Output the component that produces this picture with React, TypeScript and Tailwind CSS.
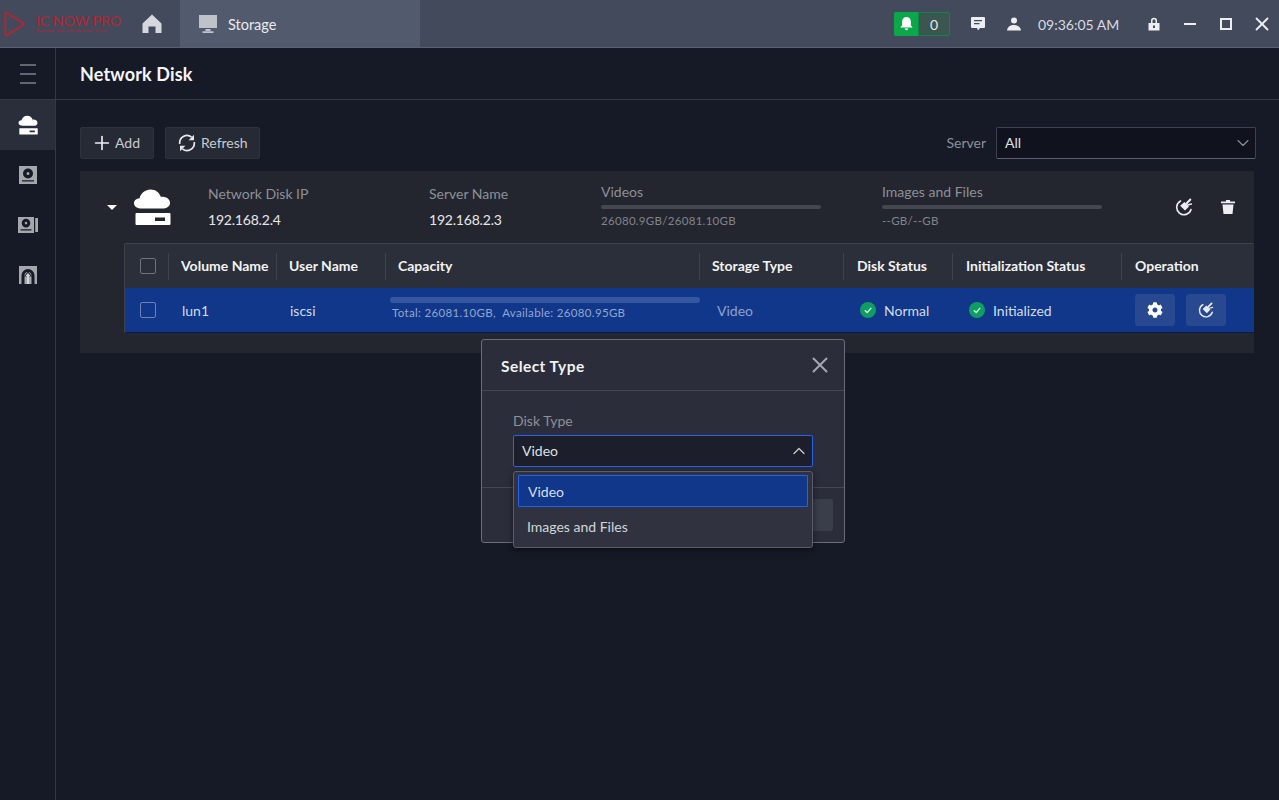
import { ChevronDown, ChevronUp, Plus, X } from 'lucide-react';
import { FaCog } from 'react-icons/fa';

function CloudDisk({ className }: { className?: string }) {
  return (
    <svg viewBox="0 0 38 38" className={className} fill="currentColor">
      <path d="M9 20.500C4.500 20.500 1 18.600 1 15.200 1 12.400 3.400 10.400 6.600 10.200 7.800 5.200 12.200 1.600 17.600 1.600c4.700 0 8.700 2.800 10.200 7.200 4.600-.4 9.200 1.600 9.200 6.200 0 3.600-3.400 5.500-7.800 5.500z" />
      <path fillRule="evenodd" d="M3.500 25H36.500a1 1 0 0 1 1 1v10a1 1 0 0 1-1 1H3.500a1 1 0 0 1-1-1V26a1 1 0 0 1 1-1zM22 29.500v3.500h10v-3.500z" />
    </svg>
  );
}

function DiskIcon() {
  return (
    <svg viewBox="0 0 18 18" className="h-[18px] w-[18px] text-[#a4a7ae]" fill="currentColor">
      <path fillRule="evenodd" d="M0 0h18v18H0zM9 2.500a5 5 0 1 0 0 10 5 5 0 0 0 0-10zM9 6a1.500 1.500 0 1 1 0 3 1.500 1.500 0 0 1 0-3zM3 14.300v1.200h12v-1.200z" />
    </svg>
  );
}

function UploadIcon() {
  return (
    <svg viewBox="0 0 18 18" className="h-[18px] w-[18px]">
      <rect width="18" height="18" fill="#a4a7ae" />
      <path d="M2.500 18V9.500a6.500 6.500 0 0 1 13 0V18H12.500V9.500a3.500 3.500 0 0 0-7 0V18z" fill="#161a26" />
      <path d="M9 5.500 13.500 10.500H5z" fill="#161a26" />
      <path d="M9 7 11.800 10.200H10V18H8V10.200H6.200z" fill="#d4d6da" />
    </svg>
  );
}

function RecordIcon() {
  return (
    <svg viewBox="0 0 20 16" className="h-4 w-5 text-[#a4a7ae]" fill="currentColor">
      <path fillRule="evenodd" d="M0 0h16v16H0zM8 1.800a4.300 4.300 0 1 0 0 8.600 4.300 4.300 0 0 0 0-8.600zM8 4.800a1.300 1.300 0 1 1 0 2.600 1.300 1.300 0 0 1 0-2.600zM2.500 12.200v1.200h11v-1.200z" />
      <path d="M17.200 1H20v14h-2.800z" />
    </svg>
  );
}

function CleanIcon({ className }: { className?: string }) {
  return (
    <svg viewBox="0 0 18 18" className={className} fill="none" stroke="currentColor">
      <path d="M5.500 3A7.300 7.300 0 1 0 16 11.500" strokeWidth="1.600" strokeLinecap="round" />
      <path d="M5.200 7.800 9.400 3.900 14 8.400 10 12.600z" fill="currentColor" stroke="none" />
      <path d="M11.500 5.500 15.300 1.500" strokeWidth="2" strokeLinecap="round" />
      <path d="M12.500 7 16.500 6" strokeWidth="1.300" strokeLinecap="round" />
    </svg>
  );
}

function RefreshIcon() {
  return (
    <svg viewBox="0 0 18 18" className="h-[18px] w-[18px] text-[#e6e7ea]" fill="none" stroke="currentColor" strokeWidth="1.700">
      <path d="M1.800 10A7.300 7.300 0 0 1 13.600 3.200" />
      <path d="M16.200 8A7.300 7.300 0 0 1 4.400 14.800" />
      <path d="M16 .8v5.400h-5.400z M2 17.200v-5.400h5.400z" fill="currentColor" stroke="none" />
    </svg>
  );
}

function CheckCircle() {
  return (
    <svg viewBox="0 0 16 16" className="h-4 w-4 shrink-0">
      <circle cx="8" cy="8" r="8" fill="#0f9d63" />
      <path d="M4.800 8.200 7.200 10.500 11.300 5.900" fill="none" stroke="#cfeee0" strokeWidth="1.300" />
    </svg>
  );
}

function UsageBlock({ title, value }: { title: string; value: string }) {
  return (
    <div className="w-[220px] -translate-y-[1px]">
      <div className="text-[14px] leading-[18px] text-[#8d9097]">{title}</div>
      <div className="mt-[4px] h-[4px] rounded-full bg-[#444752]" />
      <div className="mt-[4px] text-[11.500px] leading-[16px] tracking-[0.3px] text-[#81848b]">{value}</div>
    </div>
  );
}

const columns = [
  { label: 'Volume Name', width: 'w-[108px]', pad: 'pl-[12px]' },
  { label: 'User Name', width: 'w-[109px]', pad: 'pl-[12px]' },
  { label: 'Capacity', width: 'w-[314px]', pad: 'pl-[12px]' },
  { label: 'Storage Type', width: 'w-[144px]', pad: 'pl-[12px]' },
  { label: 'Disk Status', width: 'w-[109px]', pad: 'pl-[13px]' },
  { label: 'Initialization Status', width: 'w-[169px]', pad: 'pl-[13px]' },
  { label: 'Operation', width: 'flex-1', pad: 'pl-[13px]' },
];

export default function App() {
  return (
    <div className="relative flex h-[800px] w-[1279px] flex-col overflow-hidden bg-[#161a26] font-['Lato',sans-serif] text-[14px] text-white">
      {/* Title bar */}
      <div className="flex h-[48px] shrink-0 items-stretch border-b border-[#5d6273] bg-[#434a5c]">
        <div className="flex w-[124px] items-center pl-[3px]">
          <svg viewBox="0 0 22 26" className="h-[26px] w-[22px] shrink-0" fill="none" stroke="#b8242e" strokeWidth="1.800" strokeLinejoin="round">
            <path d="M2.200 2.500Q2.200 1.200 3.500 1.800L20.400 12.200Q21.200 13 20.400 13.800L4 24.300Q2.800 24.800 2.400 23.500z" />
          </svg>
          <div className="ml-[11px] flex flex-col whitespace-nowrap">
            <span className="text-[14.200px] leading-[14px] tracking-[-0.1px] text-[#b8242e]">IC NOW PRO</span>
            <span className="mt-[1px] text-[3.400px] leading-[5px] text-[#b8242e]">Professional, Stable, &amp; Reliable Remote Viewing</span>
          </div>
        </div>
        <div className="flex w-[56px] items-center justify-center">
          <svg viewBox="0 0 20 20" className="h-[20px] w-[20px]">
            <path d="M10 .5 19.500 9.500V19H13V13H7V19H.5V9.500z" fill="#d6d8dd" />
            <path d="M6.500 12.500h7V19h-7z" fill="#434a5c" />
          </svg>
        </div>
        <div className="flex w-[240px] items-center bg-[#525a6e] pl-[19px]">
          <svg viewBox="0 0 18 18" className="h-[18px] w-[18px] text-[#bfc2c9]" fill="currentColor">
            <path fillRule="evenodd" d="M0 0h18v13H0z" />
            <path d="M6.500 14h5v2h-5zM3.500 16.200h11V18h-11z" />
          </svg>
          <span className="ml-[11px] pt-[2px] text-[14.500px] text-[#e9eaed]">Storage</span>
        </div>
        <div className="flex-1" />
        <div className="flex items-center pr-[9px]">
          <div className="flex h-[24px] w-[24px] items-center justify-center rounded-l-[2px] bg-[#0aa84a]">
            <svg viewBox="0 0 14 16" className="h-[14px] w-[13px]" fill="white">
              <path d="M7 0a5 5 0 0 1 5 5v4.500l2 2.500H0l2-2.500V5a5 5 0 0 1 5-5zM5 13h4a2 2 0 0 1-4 0z" />
            </svg>
          </div>
          <div className="flex h-[24px] w-[32px] items-center justify-center rounded-r-[2px] border border-[#0d8a42] bg-[#3b5650] pt-[2px] text-[14px] text-[#e6e7ea]">0</div>
          <svg viewBox="0 0 14 14" className="ml-[21px] h-[14px] w-[14px]" fill="#eceef1">
            <path fillRule="evenodd" d="M1 0h12a1 1 0 0 1 1 1v9a1 1 0 0 1-1 1H9l-2 2.500L6 11H1a1 1 0 0 1-1-1V1a1 1 0 0 1 1-1zM3 3v1.300h8V3zM3 6v1.300h5.500V6z" />
          </svg>
          <svg viewBox="0 0 14 14" className="ml-[22px] h-[14px] w-[14px]" fill="#eceef1">
            <circle cx="7" cy="3.500" r="3" />
            <path d="M0 13.500C.4 9.800 3.300 8 7 8s6.600 1.800 7 5.500z" />
          </svg>
          <span className="ml-[17px] w-[90px] whitespace-nowrap pt-[2px] text-[14px] text-[#d9dbe0]">09:36:05 AM</span>
          <svg viewBox="0 0 12 14" className="ml-[20px] h-[14px] w-[12px]" fill="#eceef1">
            <path fillRule="evenodd" d="M3 6V3.800a3 3 0 0 1 6 0V6h2.500v7.500H.5V6zM4.500 6h3V3.800a1.500 1.500 0 0 0-3 0zM5 8.500v2.500h2V8.500z" />
          </svg>
          <div className="ml-[24px] h-[2px] w-[12px] bg-[#eceef1]" />
          <div className="ml-[24px] h-[12px] w-[12px] border-2 border-[#eceef1]" />
          <X className="-mr-[3px] ml-[19px] h-[22px] w-[22px] text-[#eceef1]" strokeWidth={2} absoluteStrokeWidth />
        </div>
      </div>

      <div className="flex min-h-0 flex-1">
        {/* Sidebar */}
        <aside className="flex w-[56px] shrink-0 flex-col border-r border-[#343845]">
          <div className="flex h-[52px] shrink-0 flex-col items-center justify-center gap-[7px] border-b border-[#343845]">
            <div className="h-[2px] w-[16px] bg-[#63666f]" />
            <div className="h-[2px] w-[16px] bg-[#63666f]" />
            <div className="h-[2px] w-[16px] bg-[#63666f]" />
          </div>
          <div className="flex h-[50px] items-center justify-center bg-[#2a2e3a]">
            <CloudDisk className="h-[20px] w-[20px] text-white" />
          </div>
          <div className="flex h-[50px] items-center justify-center">
            <DiskIcon />
          </div>
          <div className="flex h-[50px] items-center justify-center">
            <RecordIcon />
          </div>
          <div className="flex h-[50px] items-center justify-center">
            <UploadIcon />
          </div>
        </aside>

        <main className="min-w-0 flex-1">
          <div className="flex h-[52px] items-center border-b border-[#343845] pl-[24px] pt-[2px] text-[18px] font-bold tracking-[0.15px] text-[#f4f5f6]">Network Disk</div>

          <div className="pl-[24px] pr-[25px]">
            {/* Toolbar */}
            <div className="mt-[26px] flex h-[33px] items-center">
              <button className="flex h-[32px] w-[74px] items-center rounded-[2px] border border-[#2f323d] bg-[#262a35] pl-[10px] text-[14px] text-[#c9cbd0]">
                <Plus className="h-[22px] w-[22px] text-[#eceef1]" strokeWidth={1.800} absoluteStrokeWidth />
                <span className="ml-[2px]">Add</span>
              </button>
              <button className="ml-[11px] flex h-[32px] w-[95px] items-center rounded-[2px] border border-[#2f323d] bg-[#262a35] pl-[12px] text-[14px] text-[#c9cbd0]">
                <RefreshIcon />
                <span className="ml-[5px]">Refresh</span>
              </button>
              <div className="flex-1" />
              <span className="mr-[10px] text-[14px] text-[#8d9097]">Server</span>
              <div className="-mr-[2px] flex h-[32px] w-[260px] items-center justify-between rounded-[2px] border border-[#3d4150] border-b-[#5d6070] bg-[#10131d] pl-[8px] pr-[2px] text-[14px] text-[#dfe0e4]">
                <span>All</span>
                <ChevronDown className="h-[20px] w-[20px] text-[#8d9097]" strokeWidth={1.300} absoluteStrokeWidth />
              </div>
            </div>

            {/* Disk panel */}
            <section className="mt-[12px] h-[182px] bg-[#23262f]">
              <div className="flex h-[72px] items-center">
                <div className="ml-[27px] h-0 w-0 border-x-[5px] border-t-[5px] border-x-transparent border-t-white" />
                <CloudDisk className="ml-[16px] h-[38px] w-[38px] text-white" />
                <div className="ml-[37px] w-[221px]">
                  <div className="leading-[18px] text-[#8d9097]">Network Disk IP</div>
                  <div className="mt-[8px] leading-[18px] tracking-[-0.2px] text-[#e6e7ea]">192.168.2.4</div>
                </div>
                <div className="w-[172px]">
                  <div className="leading-[18px] text-[#8d9097]">Server Name</div>
                  <div className="mt-[8px] leading-[18px] tracking-[-0.2px] text-[#e6e7ea]">192.168.2.3</div>
                </div>
                <UsageBlock title="Videos" value="26080.9GB/26081.10GB" />
                <div className="w-[61px]" />
                <UsageBlock title="Images and Files" value="--GB/--GB" />
                <CleanIcon className="ml-[73px] h-[18px] w-[18px] text-[#eceef1]" />
                <svg viewBox="0 0 14 14" className="ml-[28px] h-[14px] w-[14px]" fill="#eceef1">
                  <path d="M5 0h4v1.500h5V3.200H0V1.500h5zM1.500 4.500h11L11.500 14h-9z" />
                </svg>
              </div>

              {/* Volume table */}
              <div className="ml-[44px] rounded-t-[2px] border-l border-t border-[#3d4150]">
                <div className="flex h-[44px] items-center bg-[#2b2f3a] text-[14px] font-bold text-[#f1f2f4]">
                  <div className="flex h-[27px] w-[44px] shrink-0 items-center justify-center border-r border-[#3d4150] pl-[3px]">
                    <div className="h-[16px] w-[16px] rounded-[2px] border border-[#70737d]" />
                  </div>
                  {columns.map((col, i) => (
                    <div
                      key={col.label}
                      className={`flex h-[27px] shrink-0 items-center whitespace-nowrap pb-[2px] ${col.width} ${col.pad} ${i < columns.length - 1 ? 'border-r border-[#3d4150]' : ''}`}
                    >
                      {col.label}
                    </div>
                  ))}
                </div>
                <div className="flex h-[45px] items-center border-b border-[#0b1c44] bg-[#10378a] text-[14px] text-[#d3dbec]">
                  <div className="flex w-[43px] shrink-0 items-center justify-center pl-[2px]">
                    <div className="h-[16px] w-[16px] rounded-[2px] border border-[#6a82b5]" />
                  </div>
                  <div className="w-[109px] shrink-0 pl-[14px]">lun1</div>
                  <div className="w-[108px] shrink-0 pl-[13px]">iscsi</div>
                  <div className="w-[314px] shrink-0 -translate-y-[1px] pl-[5px]">
                    <div className="h-[6px] w-[310px] rounded-full bg-[#3457a0]" />
                    <div className="mt-[2px] whitespace-pre pl-[2px] text-[11.500px] leading-[16px] tracking-[0.33px] text-[#93a6cf]">Total: 26081.10GB,  Available: 26080.95GB</div>
                  </div>
                  <div className="w-[145px] shrink-0 pl-[18px] text-[#8ea2cd]">Video</div>
                  <div className="flex w-[109px] shrink-0 items-center pl-[16px]">
                    <CheckCircle />
                    <span className="ml-[8px]">Normal</span>
                  </div>
                  <div className="flex w-[169px] shrink-0 items-center pl-[16px]">
                    <CheckCircle />
                    <span className="ml-[8px]">Initialized</span>
                  </div>
                  <div className="flex flex-1 items-center gap-[11px] pl-[13px]">
                    <div className="flex h-[32px] w-[40px] items-center justify-center rounded-[3px] bg-[#28498f]">
                      <FaCog className="h-[16px] w-[16px] text-white" />
                    </div>
                    <div className="flex h-[32px] w-[40px] items-center justify-center rounded-[3px] bg-[#28498f]">
                      <CleanIcon className="h-[16px] w-[16px] text-[#e6e9f1]" />
                    </div>
                  </div>
                </div>
              </div>
            </section>
          </div>
        </main>
      </div>

      {/* Select Type dialog */}
      <div className="absolute left-[481px] top-[339px] h-[204px] w-[364px] rounded-[3px] border border-[#6b6e79] bg-[#2b2e3a]">
        <div className="flex h-[51px] items-center justify-between border-b border-[#454854] pl-[19px] pr-[11px]">
          <span className="pt-[3px] text-[15.500px] font-bold tracking-[0.45px] text-[#f1f2f4]">Select Type</span>
          <X className="h-[26px] w-[26px] text-[#a4a7ae]" strokeWidth={1.800} absoluteStrokeWidth />
        </div>
        <div className="pl-[31px] pt-[21px] text-[14px] leading-[18px] text-[#8d9097]">Disk Type</div>
        <div className="ml-[31px] mt-[5px] flex h-[32px] w-[300px] items-center justify-between rounded-[2px] border border-[#2563eb] bg-[#1c1f2b] pl-[8px] pr-[3px] text-[#dfe0e4]">
          <span className="pb-[1px]">Video</span>
          <ChevronUp className="h-[20px] w-[20px] text-[#c9cbd0]" strokeWidth={1.500} absoluteStrokeWidth />
        </div>
        <div className="mt-[20px] flex h-[54px] items-start justify-end border-t border-[#454854] pr-[11px] pt-[11px]">
          <div className="h-[32px] w-[60px] rounded-[2px] bg-[#3a3e4b]" />
        </div>
      </div>

      {/* Dropdown menu */}
      <div className="absolute left-[513px] top-[471px] h-[77px] w-[300px] rounded-[3px] border border-[#5a5d69] bg-[#30333f] px-[4px] pt-[3px] shadow-[0_2px_6px_rgba(0,0,0,0.5)]">
        <div className="flex h-[32px] items-center rounded-[1px] border border-[#2563eb] bg-[#10378a] pl-[9px] text-[#d8deec]">Video</div>
        <div className="flex h-[38px] items-center pl-[9px] text-[#d3d5da]">Images and Files</div>
      </div>
    </div>
  );
}
